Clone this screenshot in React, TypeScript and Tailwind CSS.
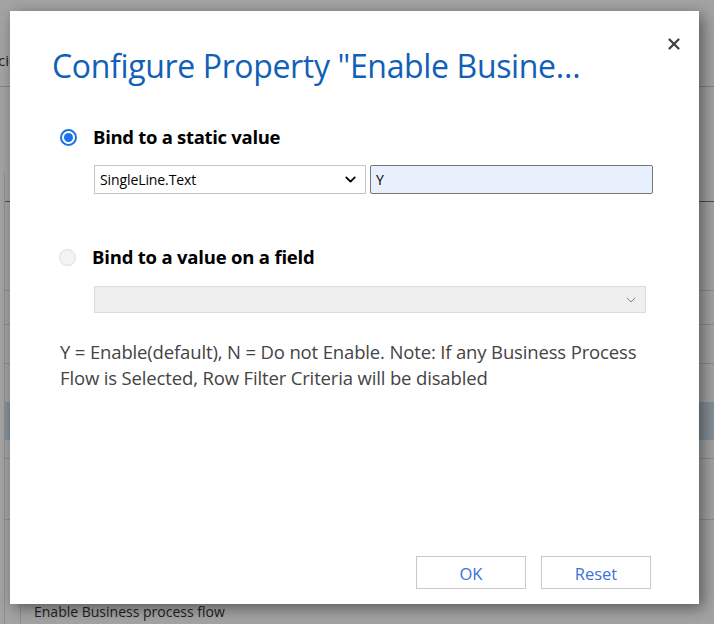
import { ChevronDown, X } from 'lucide-react'

const FONT = { fontFamily: '"Open Sans", "Noto Sans", sans-serif' }

function BackgroundPage() {
  return (
    <div className="h-[624px] w-[714px] overflow-hidden bg-white text-[#333]" style={FONT}>
      <div className="flex h-[87px] items-center border-b border-[#ccc] pt-[34px]">
        <span className="-ml-[2px] text-[15px]">cies</span>
      </div>
      <div className="h-[86px]" />
      <div className="ml-[4px] flex h-[451px] flex-col border-l border-[#ddd]">
        <div className="h-[29px] border-b border-[#777]" />
        <div className="h-[88px]" />
        <div className="h-[34px] border-t border-[#ddd]" />
        <div className="h-[39px] border-t border-[#ddd]" />
        <div className="h-[39px] border-t border-[#ddd]" />
        <div className="h-[38px] bg-[#cfe0ee]" />
        <div className="h-[18px]" />
        <div className="h-[61px] border-t border-[#ddd]" />
        <div className="flex flex-1 border-t border-[#ddd]">
          <div className="w-[16px] border-r border-[#ddd]" />
          <div className="flex items-end pb-[2px] pl-[13px] text-[14px]">Enable Business process flow</div>
        </div>
      </div>
    </div>
  )
}

function Radio({ checked }: { checked: boolean }) {
  return checked ? (
    <span className="flex h-[17px] w-[17px] items-center justify-center rounded-full border-[2px] border-[#1a73e8] bg-white">
      <span className="h-[9px] w-[9px] rounded-full bg-[#1a73e8]" />
    </span>
  ) : (
    <span className="h-[17px] w-[17px] rounded-full border border-[#dcdcdc] bg-[#f3f3f3]" />
  )
}

export default function App() {
  return (
    <div className="relative h-[624px] w-[714px] overflow-hidden">
      <BackgroundPage />
      <div className="absolute inset-0 bg-black/[0.36]" />
      <div
        className="absolute left-[10px] top-[11px] flex h-[593px] w-[689px] flex-col bg-white text-[#444] shadow-[4px_4px_14px_rgba(0,0,0,0.45)]"
        style={FONT}
      >
        <button className="absolute right-[16px] top-[24px] text-[#444]">
          <X size={18} strokeWidth={3} />
        </button>
        <h1 className="mt-[35px] pl-[42px] text-[32px] leading-[40px] tracking-[-0.35px] text-[#1160b7]">
          Configure Property "Enable Busine…
        </h1>

        <div className="mt-[39px] flex items-center gap-[16px] pl-[50px]">
          <Radio checked />
          <span className="text-[18.5px] font-bold leading-[24px] tracking-[-0.3px] text-black">Bind to a static value</span>
        </div>
        <div className="mt-[16px] flex gap-[4px] pl-[84px]">
          <div className="flex h-[29px] w-[272px] items-center justify-between border border-[#c4c4c4] pl-[5px] pr-[6px] text-[14px] text-black">
            <span className="tracking-[-0.1px]">SingleLine.Text</span>
            <ChevronDown size={17} strokeWidth={2.5} />
          </div>
          <div className="flex h-[29px] w-[283px] items-center rounded-[2px] border border-[#767676] bg-[#e8f0fe] pl-[5px] text-[14px] text-black">
            Y
          </div>
        </div>

        <div className="mt-[51px] flex items-center gap-[16px] pl-[49px]">
          <Radio checked={false} />
          <span className="text-[18.5px] font-bold leading-[24px] tracking-[-0.2px] text-black">Bind to a value on a field</span>
        </div>
        <div className="ml-[84px] mt-[17px] flex h-[27px] w-[552px] items-center justify-end border border-[#dcdcdc] bg-[#efefef] pr-[6px] text-[#888]">
          <ChevronDown size={16} strokeWidth={1.5} />
        </div>

        <p className="mt-[26px] pl-[50px] pr-[36px] text-[18.5px] leading-[26px] tracking-[-0.15px] text-[#444]">
          Y = Enable(default), N = Do not Enable. Note: If any Business Process Flow is Selected, Row Filter Criteria will be disabled
        </p>

        <div className="mt-auto mb-[15px] flex justify-end gap-[15px] pr-[48px]">
          <button className="h-[33px] w-[110px] border border-[#c8c8c8] bg-white pt-[3px] text-[16.5px] text-[#3b73d9]">OK</button>
          <button className="h-[33px] w-[110px] border border-[#c8c8c8] bg-white pt-[3px] text-[16.5px] text-[#3b73d9]">Reset</button>
        </div>
      </div>
    </div>
  )
}
